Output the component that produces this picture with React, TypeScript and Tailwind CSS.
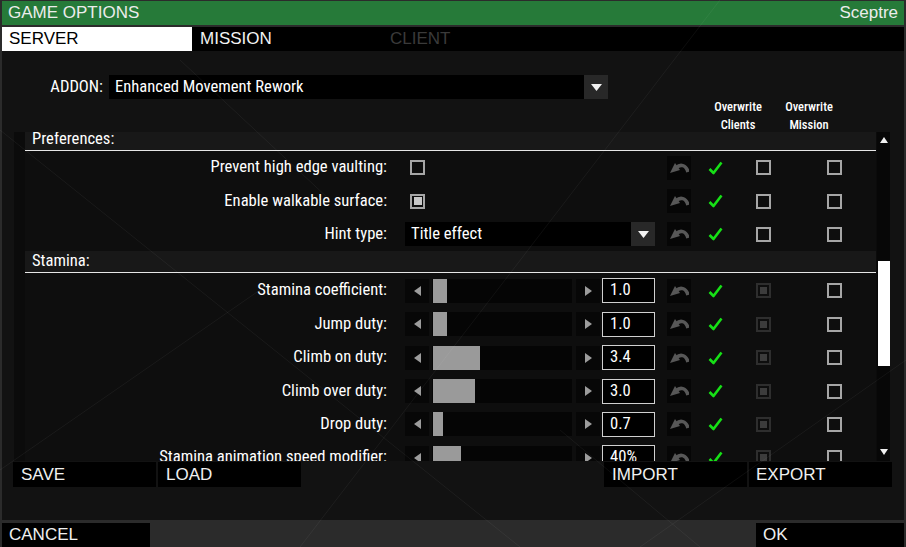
import React from 'react';

const body = "font-['Roboto_Condensed','Liberation_Sans_Narrow','DejaVu_Sans_Condensed',Roboto,sans-serif]";
const square = "font-['Liberation_Sans',Arial,sans-serif]";

type PrefRow =
  | { label: string; kind: 'check'; checked: boolean }
  | { label: string; kind: 'select'; value: string };

const prefs: PrefRow[] = [
  { label: 'Prevent high edge vaulting:', kind: 'check', checked: false },
  { label: 'Enable walkable surface:', kind: 'check', checked: true },
  { label: 'Hint type:', kind: 'select', value: 'Title effect' },
];

const stamina = [
  { label: 'Stamina coefficient:', fill: 14, value: '1.0' },
  { label: 'Jump duty:', fill: 14, value: '1.0' },
  { label: 'Climb on duty:', fill: 47, value: '3.4' },
  { label: 'Climb over duty:', fill: 42, value: '3.0' },
  { label: 'Drop duty:', fill: 10, value: '0.7' },
  { label: 'Stamina animation speed modifier:', fill: 28, value: '40%' },
];

function DownArrow() {
  return (
    <svg width="11" height="7" viewBox="0 0 11 7">
      <path d="M0 0 H11 L5.5 7 Z" fill="#f2f2f2" />
    </svg>
  );
}

function Checkbox({ state }: { state: 'off' | 'on' | 'disabled' }) {
  if (state === 'disabled') {
    return (
      <div className="w-[15px] h-[15px] border-2 border-[#2e2e2e] flex items-center justify-center">
        <div className="w-[7px] h-[7px] bg-[#3c3c3c]" />
      </div>
    );
  }
  return (
    <div className="w-[15px] h-[15px] border-2 border-[#a6a6a6] flex items-center justify-center">
      {state === 'on' && <div className="w-[8px] h-[8px] bg-[#c8c8c8]" />}
    </div>
  );
}

function ResetButton() {
  return (
    <div className="w-[24px] h-[24px] bg-[#060606] flex items-center justify-center">
      <svg width="20" height="16" viewBox="0 0 20 16">
        <path d="M7.5 7.5 C 11 4, 17 4.5, 19 12" stroke="#575757" strokeWidth="3.6" fill="none" />
        <path d="M1 13 L 6 3 L 11 10 Z" fill="#575757" />
      </svg>
    </div>
  );
}

function GreenCheck() {
  return (
    <svg width="15" height="14" viewBox="0 0 15 14">
      <path d="M1.5 8 L5.5 12 L13.5 1.5" stroke="#16e016" strokeWidth="2.6" fill="none" strokeLinejoin="round" />
    </svg>
  );
}

function SideCells({ clients }: { clients: 'off' | 'disabled' }) {
  return (
    <>
      <div className="ml-[12px]">
        <ResetButton />
      </div>
      <div className="w-[48px] flex justify-center">
        <GreenCheck />
      </div>
      <div className="w-[48px] flex justify-center">
        <Checkbox state={clients} />
      </div>
      <div className="ml-[33px] w-[28px] flex justify-center">
        <Checkbox state="off" />
      </div>
    </>
  );
}

function Label({ text }: { text: string }) {
  return <div className="w-[363px] text-right text-[16.6px] text-white pr-[1px] whitespace-nowrap">{text}</div>;
}

function SectionHeader({ title }: { title: string }) {
  return (
    <div className="h-[22px] bg-[#181818] border-b border-[#e6e6e6] flex items-center pl-[7px] text-[16.6px] text-white">
      {title}
    </div>
  );
}

function Slider({ fill, value }: { fill: number; value: string }) {
  return (
    <div className="flex items-center h-[24px]">
      <div className="w-[24px] h-[24px] bg-[#070707] flex items-center justify-center">
        <svg width="7" height="10" viewBox="0 0 7 10">
          <path d="M7 0 V10 L0 5 Z" fill="#9c9c9c" />
        </svg>
      </div>
      <div className="ml-[3px] w-[140px] h-[24px] bg-[#050505] pl-[1px]">
        <div className="h-full bg-[#9a9a9a]" style={{ width: fill }} />
      </div>
      <div className="ml-[4px] w-[24px] h-[24px] bg-[#070707] flex items-center justify-center">
        <svg width="7" height="10" viewBox="0 0 7 10">
          <path d="M0 0 V10 L7 5 Z" fill="#9c9c9c" />
        </svg>
      </div>
      <div className="ml-[2px] w-[53px] h-[25px] bg-black border border-[#d0d0d0] pl-[7px] text-[16.6px] text-white flex items-center">
        {value}
      </div>
    </div>
  );
}

function Lines() {
  return (
    <svg className="absolute inset-0 pointer-events-none" width="906" height="547" viewBox="0 0 906 547">
      <g stroke="#ffffff" strokeOpacity="0.05" strokeWidth="1">
        <line x1="0" y1="470" x2="260" y2="290" />
        <line x1="300" y1="547" x2="720" y2="0" />
        <line x1="560" y1="430" x2="700" y2="547" />
        <line x1="0" y1="130" x2="520" y2="547" />
        <line x1="640" y1="547" x2="906" y2="360" />
        <line x1="180" y1="60" x2="330" y2="200" />
      </g>
    </svg>
  );
}

export default function App() {
  return (
    <div className={`relative w-[906px] h-[547px] overflow-hidden bg-[#2b2b2b] ${body}`}>
      <div className="flex flex-col h-full px-[2px]">
        <div className={`mt-px h-[24px] bg-[#267a39] flex items-center justify-between px-[6px] text-[17px] text-[#ececec] ${square}`}>
          <span>GAME OPTIONS</span>
          <span>Sceptre</span>
        </div>
        <div className={`mt-[2px] h-[24px] bg-black flex items-center text-[17px] ${square}`}>
          <div className="w-[190px] h-full bg-white text-black flex items-center pl-[7px]">SERVER</div>
          <div className="w-[190px] h-full text-[#f2f2f2] flex items-center pl-[8px]">MISSION</div>
          <div className="h-full text-[#3a3a3a] flex items-center pl-[8px]">CLIENT</div>
        </div>

        <div className="h-[469px] bg-[#121212] flex flex-col">
          <div className="mt-[24px] h-[24px] flex items-center">
            <div className="w-[101px] text-right text-[16.6px] text-white">ADDON:</div>
            <div className="ml-[6px] w-[475px] h-full bg-black flex items-center pl-[6px] text-[16.6px] text-white">
              Enhanced Movement Rework
            </div>
            <div className="w-[24px] h-full bg-[#282828] flex items-center justify-center">
              <DownArrow />
            </div>
          </div>

          <div className="h-[34px] flex -mt-px text-[12.5px] leading-[18px] text-white font-medium">
            <div className="ml-[712px] w-[48px] flex flex-col items-center">
              <span>Overwrite</span>
              <span>Clients</span>
            </div>
            <div className="ml-[23px] w-[48px] flex flex-col items-center">
              <span>Overwrite</span>
              <span>Mission</span>
            </div>
          </div>

          <div className="ml-[12px] w-[876px] h-[329px] flex bg-[#0b0b0b]">
            <div className="w-[11px]" />
            <div className="w-[851px] overflow-hidden bg-[#0e0e0e]">
              <div className="-mt-[3px]">
                <SectionHeader title="Preferences:" />
                {prefs.map((r) => (
                  <div key={r.label} className="h-[33.4px] flex items-center">
                    <Label text={r.label} />
                    <div className="ml-[17px] w-[250px] flex items-center">
                      {r.kind === 'check' ? (
                        <div className="ml-[5px]">
                          <Checkbox state={r.checked ? 'on' : 'off'} />
                        </div>
                      ) : (
                        <div className="flex w-full h-[24px]">
                          <div className="flex-1 bg-black flex items-center pl-[6px] text-[16.6px] text-white">{r.value}</div>
                          <div className="w-[24px] bg-[#282828] flex items-center justify-center">
                            <DownArrow />
                          </div>
                        </div>
                      )}
                    </div>
                    <SideCells clients="off" />
                  </div>
                ))}
                <SectionHeader title="Stamina:" />
                <div className="h-[1px]" />
                {stamina.map((r) => (
                  <div key={r.label} className="h-[33.4px] flex items-center">
                    <Label text={r.label} />
                    <div className="ml-[17px] w-[250px]">
                      <Slider fill={r.fill} value={r.value} />
                    </div>
                    <SideCells clients="disabled" />
                  </div>
                ))}
              </div>
            </div>
            <div className="ml-px w-[13px] bg-[#070707] relative">
              <svg className="absolute left-[3px] top-[5px]" width="8" height="6" viewBox="0 0 8 6">
                <path d="M0 6 H8 L4 0 Z" fill="#f0f0f0" />
              </svg>
              <div className="absolute left-px right-0 top-[129px] h-[105px] bg-white" />
              <svg className="absolute left-[3px] top-[317px]" width="8" height="6" viewBox="0 0 8 6">
                <path d="M0 0 H8 L4 6 Z" fill="#f0f0f0" />
              </svg>
            </div>
          </div>

          <div className={`mt-px h-[25px] flex text-[17px] text-[#f0f0f0] ${square}`}>
            <div className="ml-[11px] w-[143px] bg-black flex items-center pl-[8px]">SAVE</div>
            <div className="ml-[2px] w-[143px] bg-black flex items-center pl-[8px]">LOAD</div>
            <div className="ml-[303px] w-[143px] bg-black flex items-center pl-[8px]">IMPORT</div>
            <div className="ml-[2px] w-[143px] bg-black flex items-center pl-[7px]">EXPORT</div>
          </div>
        </div>

        <div className={`mt-[3px] h-[24px] flex justify-between text-[17px] text-[#f0f0f0] ${square}`}>
          <div className="w-[148px] bg-black flex items-center pl-[7px]">CANCEL</div>
          <div className="w-[148px] bg-black flex items-center pl-[7px]">OK</div>
        </div>
      </div>
      <Lines />
    </div>
  );
}
